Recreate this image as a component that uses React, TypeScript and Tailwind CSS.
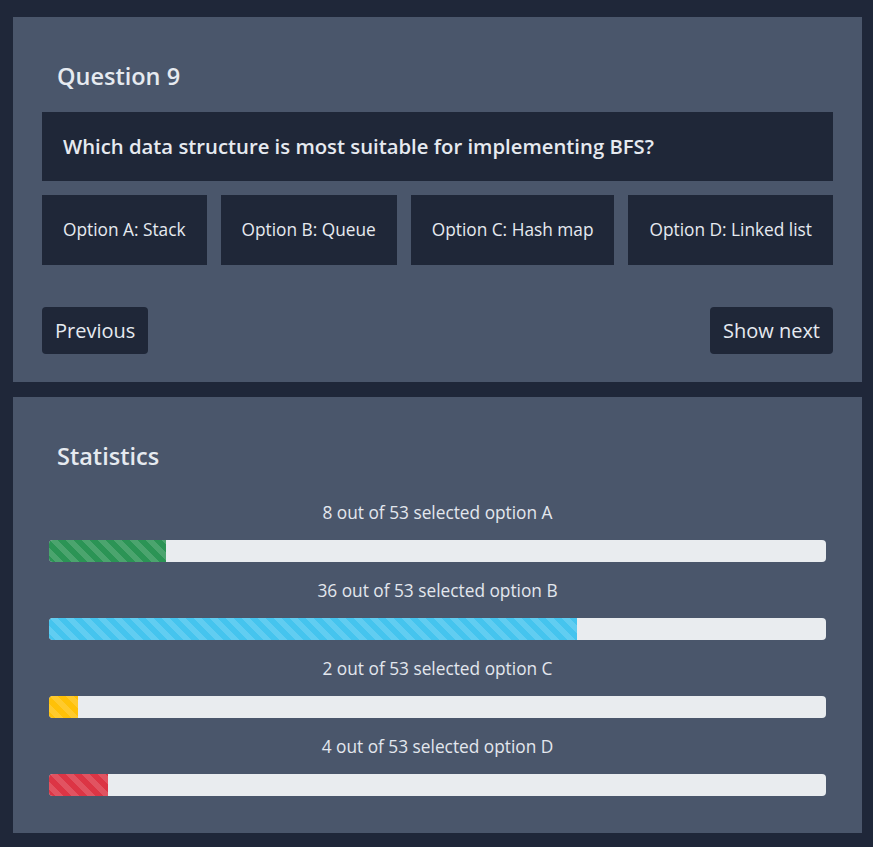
import React from "react";

const stripe =
  "linear-gradient(45deg, rgba(255,255,255,.15) 25%, transparent 25%, transparent 50%, rgba(255,255,255,.15) 50%, rgba(255,255,255,.15) 75%, transparent 75%, transparent)";

const stats = [
  { label: "8 out of 53 selected option A", n: 8, color: "#2b9455" },
  { label: "36 out of 53 selected option B", n: 36, color: "#45c4ee" },
  { label: "2 out of 53 selected option C", n: 2, color: "#ffc107" },
  { label: "4 out of 53 selected option D", n: 4, color: "#dc3545" },
];

const options = [
  "Option A: Stack",
  "Option B: Queue",
  "Option C: Hash map",
  "Option D: Linked list",
];

export default function App() {
  return (
    <div
      className="min-h-[847px] w-[873px] bg-[#1f2739] pl-[13px] pr-[11px] pt-[17px] pb-[14px] flex flex-col gap-[15px] text-[#e6eaf0]"
      style={{ fontFamily: '"Open Sans", "Noto Sans", sans-serif' }}
    >
      <div className="bg-[#4a566b] px-[29px] pt-[44px] pb-[28px] h-[365px]">
        <h2 className="pl-[15px] text-[23.5px] font-semibold leading-[30px]">Question 9</h2>
        <div className="mt-[21px] bg-[#1f2738] h-[69px] flex items-center px-[21px] text-[20.3px] font-semibold">
          Which data structure is most suitable for implementing BFS?
        </div>
        <div className="mt-[14px] flex gap-[14px]">
          {options.map((o) => (
            <div
              key={o}
              className="flex-auto h-[70px] bg-[#1f2738] flex items-center justify-center px-[8px] text-[17.3px]"
            >
              {o}
            </div>
          ))}
        </div>
        <div className="mt-[42px] flex justify-between">
          <button className="h-[47px] px-[13px] rounded-[4px] bg-[#1f2738] text-[20px]">
            Previous
          </button>
          <button className="h-[47px] px-[13px] rounded-[4px] bg-[#1f2738] text-[20px]">
            Show next
          </button>
        </div>
      </div>
      <div className="bg-[#4a566b] px-[36px] pt-[44px] h-[436px]">
        <h2 className="pl-[8px] text-[23.5px] font-semibold leading-[30px]">Statistics</h2>
        <div className="mt-[29px] flex flex-col">
          {stats.map((s, i) => (
            <div key={s.label} className={i === 0 ? "" : "mt-[16px]"}>
              <div className="text-center text-[17.3px] leading-[26px] text-[#e3e7ee]">{s.label}</div>
              <div className="mt-[14px] h-[22px] rounded-[4px] bg-[#e9ecef] overflow-hidden flex">
                <div
                  style={{
                    width: `${(s.n / 53) * 100}%`,
                    backgroundColor: s.color,
                    backgroundImage: stripe,
                    backgroundSize: "16px 16px",
                  }}
                />
              </div>
            </div>
          ))}
        </div>
      </div>
    </div>
  );
}
